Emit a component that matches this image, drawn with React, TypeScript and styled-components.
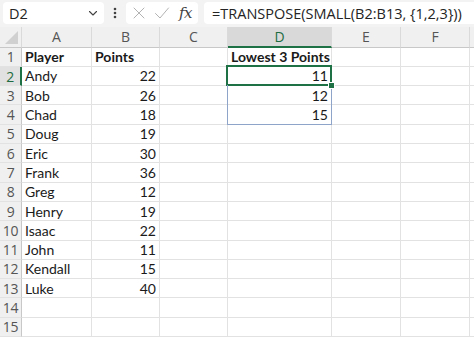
import { Fragment } from 'react';
import styled, { createGlobalStyle, css } from 'styled-components';

const GlobalStyle = createGlobalStyle`
  html, body {
    margin: 0;
    padding: 0;
    width: 474px;
    height: 337px;
    overflow: hidden;
    background: #ffffff;
  }
`;

const Page = styled.div`
  width: 474px;
  height: 337px;
  overflow: hidden;
  display: flex;
  flex-direction: column;
  background: #fff;
`;

const FormulaBar = styled.div`
  display: flex;
  align-items: center;
  height: 32px;
  padding: 0 0 0 3px;
  background: #f3f3f3;
  box-sizing: border-box;
`;

const NameBox = styled.div`
  display: flex;
  align-items: center;
  justify-content: space-between;
  width: 101px;
  height: 22px;
  padding: 0 5px 0 6px;
  box-sizing: border-box;
  background: #fff;
  border-radius: 4px;
  font-family: 'Open Sans', 'Noto Sans', sans-serif;
  font-size: 14.5px;
  color: #242424;
`;

const Kebab = styled.div`
  width: 22px;
  display: flex;
  justify-content: center;
  color: #424242;
`;

const ActionBox = styled.div`
  display: flex;
  align-items: center;
  justify-content: space-between;
  width: 72px;
  height: 22px;
  padding: 0 6px 0 6px;
  box-sizing: border-box;
  background: #fff;
  border-radius: 4px;
`;

const Fx = styled.span`
  font-family: 'DejaVu Serif', 'Liberation Serif', serif;
  font-style: italic;
  font-size: 15px;
  color: #424242;
  letter-spacing: -0.5px;
`;

const FormulaInput = styled.div`
  flex: 1;
  height: 22px;
  margin-left: 6px;
  padding-left: 8px;
  display: flex;
  align-items: center;
  background: #fff;
  border-radius: 4px 0 0 4px;
  font-family: 'Open Sans', 'Noto Sans', sans-serif;
  font-size: 14.5px;
  color: #242424;
  white-space: nowrap;
`;

const Sheet = styled.div`
  display: grid;
  grid-template-columns: 22px 70px 68px 68px 104px 69px 69px 1fr;
  grid-template-rows: 21px repeat(15, 19.3px);
  font-family: 'Lato', 'Open Sans', sans-serif;
  font-size: 14px;
  color: #1a1a1a;
`;

const Corner = styled.div`
  background: #f0f0f0;
  border-right: 1px solid #dadada;
  border-bottom: 1px solid #c8c8c8;
  position: relative;
  &::after {
    content: '';
    position: absolute;
    right: 3px;
    bottom: 3px;
    border-left: 13px solid transparent;
    border-bottom: 13px solid #d0d0d0;
  }
`;

const ColHead = styled.div<{ $active?: boolean }>`
  display: flex;
  align-items: center;
  justify-content: center;
  background: ${(p) => (p.$active ? '#d9d9d9' : '#f0f0f0')};
  color: ${(p) => (p.$active ? '#1e6c41' : '#555')};
  border-right: 1px solid #dadada;
  border-bottom: ${(p) => (p.$active ? '2px solid #1e7145' : '1px solid #c8c8c8')};
  font-family: 'Open Sans', 'Noto Sans', sans-serif;
  font-size: 14px;
  box-sizing: border-box;
`;

const RowHead = styled.div<{ $active?: boolean }>`
  display: flex;
  align-items: center;
  justify-content: center;
  background: ${(p) => (p.$active ? '#e1e1e1' : '#f0f0f0')};
  color: ${(p) => (p.$active ? '#1e6c41' : '#555')};
  border-right: ${(p) => (p.$active ? '2px solid #1e7145' : '1px solid #c8c8c8')};
  border-bottom: 1px solid #e2e2e2;
  font-family: 'Open Sans', 'Noto Sans', sans-serif;
  font-size: 14px;
  letter-spacing: -0.3px;
  box-sizing: border-box;
`;

type SpillPart = 'top' | 'mid' | 'bottom';

const Cell = styled.div<{ $num?: boolean; $bold?: boolean; $spill?: SpillPart; $active?: boolean }>`
  position: relative;
  display: flex;
  align-items: center;
  justify-content: ${(p) => (p.$num ? 'flex-end' : 'flex-start')};
  padding: 0 3px;
  border-right: 1px solid #e2e2e2;
  border-bottom: 1px solid #e2e2e2;
  font-weight: ${(p) => (p.$bold ? 700 : 400)};
  white-space: nowrap;
  box-sizing: border-box;

  ${(p) =>
    p.$spill &&
    css`
      &::before {
        content: '';
        position: absolute;
        top: -1px;
        left: -1px;
        right: -1px;
        bottom: -1px;
        border-left: 1px solid #8ea4c8;
        border-right: 1px solid #8ea4c8;
        border-top: ${p.$spill === 'top' ? '1px solid #8ea4c8' : 'none'};
        border-bottom: ${p.$spill === 'bottom' ? '1px solid #8ea4c8' : 'none'};
        pointer-events: none;
      }
    `}

  ${(p) =>
    p.$active &&
    css`
      &::after {
        content: '';
        position: absolute;
        top: -2px;
        left: -2px;
        right: -1px;
        bottom: -1px;
        border: 2px solid #1e7145;
        pointer-events: none;
      }
    `}
`;

const FillHandle = styled.span`
  position: absolute;
  right: -4px;
  bottom: -4px;
  width: 5px;
  height: 5px;
  background: #1e7145;
  border: 1px solid #fff;
  z-index: 2;
`;

const columns = ['A', 'B', 'C', 'D', 'E', 'F', 'G'];

const players: [string, number][] = [
  ['Andy', 22],
  ['Bob', 26],
  ['Chad', 18],
  ['Doug', 19],
  ['Eric', 30],
  ['Frank', 36],
  ['Greg', 12],
  ['Henry', 19],
  ['Isaac', 22],
  ['John', 11],
  ['Kendall', 15],
  ['Luke', 40],
];

const lowest = [11, 12, 15];
const spillParts: SpillPart[] = ['top', 'mid', 'bottom'];

type Row = { a?: string; b?: string; d?: string; bold?: boolean; spill?: SpillPart };

const rows: Row[] = [
  { a: 'Player', b: 'Points', d: 'Lowest 3 Points', bold: true },
  ...players.map(([name, pts], i) => ({
    a: name,
    b: String(pts),
    d: lowest[i] !== undefined ? String(lowest[i]) : undefined,
    spill: spillParts[i],
  })),
  {},
  {},
];

const ChevronDown = () => (
  <svg width="12" height="12" viewBox="0 0 12 12" fill="none">
    <path d="M2.5 4.5 L6 8 L9.5 4.5" stroke="#424242" strokeWidth="1.1" strokeLinecap="round" strokeLinejoin="round" />
  </svg>
);

const MoreVertical = () => (
  <svg width="4" height="12" viewBox="0 0 4 12">
    <circle cx="2" cy="2" r="1.3" fill="#424242" />
    <circle cx="2" cy="6" r="1.3" fill="#424242" />
    <circle cx="2" cy="10" r="1.3" fill="#424242" />
  </svg>
);

const CancelIcon = () => (
  <svg width="14" height="14" viewBox="0 0 14 14" fill="none">
    <path d="M2 2 L12 12 M12 2 L2 12" stroke="#b3b3b3" strokeWidth="1" strokeLinecap="round" />
  </svg>
);

const EnterIcon = () => (
  <svg width="16" height="14" viewBox="0 0 16 14" fill="none">
    <path d="M1.5 7.5 L6 12 L14.5 2" stroke="#b3b3b3" strokeWidth="1" strokeLinecap="round" strokeLinejoin="round" />
  </svg>
);

export default function App() {
  return (
    <>
      <GlobalStyle />
      <Page>
        <FormulaBar>
          <NameBox>
            D2
            <ChevronDown />
          </NameBox>
          <Kebab>
            <MoreVertical />
          </Kebab>
          <ActionBox>
            <CancelIcon />
            <EnterIcon />
            <Fx>fx</Fx>
          </ActionBox>
          <FormulaInput>=TRANSPOSE(SMALL(B2:B13, {'{1,2,3}'}))</FormulaInput>
        </FormulaBar>
        <Sheet>
          <Corner />
          {columns.map((c) => (
            <ColHead key={c} $active={c === 'D'}>
              {c === 'G' ? '' : c}
            </ColHead>
          ))}
          {rows.map((r, i) => (
            <Fragment key={i}>
              <RowHead $active={i === 1}>{i + 1}</RowHead>
              <Cell $bold={r.bold}>{r.a}</Cell>
              <Cell $bold={r.bold} $num={!r.bold}>{r.b}</Cell>
              <Cell />
              <Cell $bold={r.bold} $num={!r.bold} $spill={r.spill} $active={i === 1}>
                {r.d}
                {i === 1 && <FillHandle />}
              </Cell>
              <Cell />
              <Cell />
              <Cell />
            </Fragment>
          ))}
        </Sheet>
      </Page>
    </>
  );
}
